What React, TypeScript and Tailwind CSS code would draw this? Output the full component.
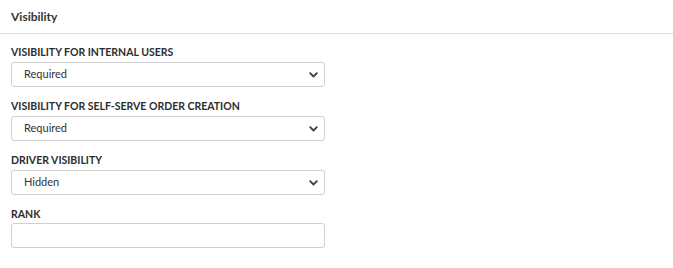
import React from 'react';

const Chevron = () => (
    <svg width="9" height="6" viewBox="0 0 9 6" className="text-[#444]">
        <path d="M1.2 1.2 L4.5 4.5 L7.8 1.2" fill="none" stroke="currentColor" strokeWidth="1.9" strokeLinecap="round" strokeLinejoin="round" />
    </svg>
);

const SelectField: React.FC<{ label: string; value: string }> = ({ label, value }) => (
    <div className="mb-[11px]">
        <div className="h-[16px] text-[10.5px] leading-[16px] font-bold text-[#2d2d2d]">{label}</div>
        <div className="mt-[2px] flex items-center justify-between w-[314px] h-[25px] border border-[#cfcfcf] rounded-[3px] bg-white pl-[12px] pr-[6px]">
            <span className="text-[11px] text-[#333]">{value}</span>
            <Chevron />
        </div>
    </div>
);

export default function App() {
    return (
        <div className="w-[673px] h-[268px] bg-white font-['Lato','Liberation_Sans',sans-serif]">
            <div className="h-[34px] flex items-center px-[11px] border-b border-[#dcdcdc]">
                <h3 className="text-[12px] font-bold text-[#333]">Visibility</h3>
            </div>
            <div className="px-[11px] pt-[10px]">
                <SelectField label="VISIBILITY FOR INTERNAL USERS" value="Required" />
                <SelectField label="VISIBILITY FOR SELF-SERVE ORDER CREATION" value="Required" />
                <SelectField label="DRIVER VISIBILITY" value="Hidden" />
                <div>
                    <div className="h-[16px] text-[10.5px] leading-[16px] font-bold text-[#2d2d2d]">RANK</div>
                    <input className="mt-[1px] block w-[314px] h-[25px] border border-[#cfcfcf] rounded-[3px] bg-white outline-none" />
                </div>
            </div>
        </div>
    );
}
